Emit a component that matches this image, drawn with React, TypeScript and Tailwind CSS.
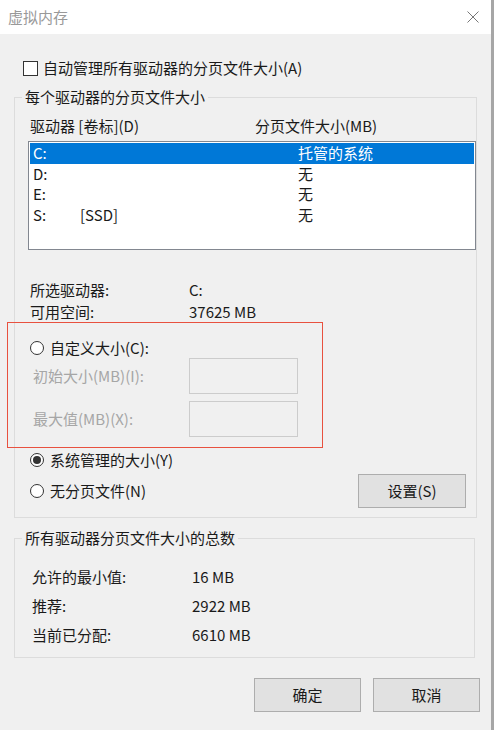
const drives = [
  { letter: 'C:', label: '', size: '托管的系统' },
  { letter: 'D:', label: '', size: '无' },
  { letter: 'E:', label: '', size: '无' },
  { letter: 'S:', label: '[SSD]', size: '无' },
];

function Radio({ checked }: { checked?: boolean }) {
  return (
    <span className="flex h-[14px] w-[14px] shrink-0 items-center justify-center rounded-full border border-[#333] bg-white">
      {checked && <span className="h-[8px] w-[8px] rounded-full bg-[#333]" />}
    </span>
  );
}

function Button({ label, className = '' }: { label: string; className?: string }) {
  return (
    <button
      className={`flex h-[34px] w-[107px] items-center justify-center border border-[#adadad] bg-[#e1e1e1] text-[15px] leading-[20px] text-[#1a1a1a] ${className}`}
    >
      {label}
    </button>
  );
}

export default function App() {
  return (
    <div className="relative flex h-[730px] w-[494px] bg-[#f0f0f0] font-['Noto_Sans_CJK_SC','Noto_Sans',sans-serif] text-[15px] text-[#1a1a1a]">
      <div className="flex flex-1 flex-col">
        {/* title bar */}
        <div className="flex h-[34px] items-center justify-between bg-white pl-[8px] pr-[12px]">
          <span className="leading-[20px] text-[#999]">虚拟内存</span>
          <svg width="12" height="12" viewBox="0 0 12 12" stroke="#777" strokeWidth="1">
            <path d="M0.5 0.5L11.5 11.5M11.5 0.5L0.5 11.5" />
          </svg>
        </div>

        <label className="mt-[26px] flex h-[16px] items-center gap-[5px] pl-[23px] leading-[20px]">
          <span className="h-[15px] w-[15px] shrink-0 border border-[#333] bg-white" />
          自动管理所有驱动器的分页文件大小(A)
        </label>

        <fieldset className="ml-[14px] mt-[11px] w-[461px] border border-[#dcdcdc]">
          <legend className="ml-[7px] px-[3px] leading-[20px]">每个驱动器的分页文件大小</legend>
          <div className="pb-[9px] pl-[13px]">
            <div className="mt-[9px] flex h-[20px] pl-[2px] leading-[20px]">
              <span className="w-[225px]">驱动器 [卷标](D)</span>
              <span>分页文件大小(MB)</span>
            </div>

            <div className="mt-[5px] h-[109px] w-[448px] border border-[#828790] bg-white p-[1px]">
              {drives.map((d, i) => (
                <div
                  key={d.letter}
                  className={`flex h-[20.5px] items-center pl-[3px] leading-[20px] ${
                    i === 0 ? 'bg-[#0078d7] text-white' : ''
                  }`}
                >
                  <span className="w-[47px]">{d.letter}</span>
                  <span className="w-[218px]">{d.label}</span>
                  <span>{d.size}</span>
                </div>
              ))}
            </div>

            <div className="mt-[29px] flex h-[22px] items-center pl-[2px] leading-[20px]">
              <span className="w-[159px]">所选驱动器:</span>
              <span>C:</span>
            </div>
            <div className="flex h-[22px] items-center pl-[2px] leading-[20px]">
              <span className="w-[159px]">可用空间:</span>
              <span>37625 MB</span>
            </div>

            <div className="mt-[15px] flex h-[20px] items-center gap-[6px] pl-[2px] leading-[20px]">
              <Radio />
              自定义大小(C):
            </div>
            <div className="flex h-[36px] items-center pl-[5px] leading-[20px] text-[#a6a6a6]">
              <span className="w-[156px]">初始大小(MB)(I):</span>
              <span className="h-[36px] w-[109px] border border-[#cccccc] bg-[#f0f0f0]" />
            </div>
            <div className="mt-[7px] flex h-[36px] items-center pl-[5px] leading-[20px] text-[#a6a6a6]">
              <span className="w-[156px]">最大值(MB)(X):</span>
              <span className="h-[36px] w-[109px] border border-[#cccccc] bg-[#f0f0f0]" />
            </div>

            <div className="mt-[13px] flex h-[20px] items-center gap-[6px] pl-[2px] leading-[20px]">
              <Radio checked />
              系统管理的大小(Y)
            </div>
            <div className="mt-[4px] flex h-[34px] items-center pl-[2px] leading-[20px]">
              <Radio />
              <span className="ml-[6px]">无分页文件(N)</span>
              <Button label="设置(S)" className="ml-auto mr-[10px] w-[108px]" />
            </div>
          </div>
        </fieldset>

        <fieldset className="ml-[14px] mt-[10px] w-[461px] border border-[#dcdcdc]">
          <legend className="ml-[7px] px-[3px] leading-[20px]">所有驱动器分页文件大小的总数</legend>
          <div className="pb-[8px] pl-[17px] pt-[14px]">
            {[
              ['允许的最小值:', '16 MB'],
              ['推荐:', '2922 MB'],
              ['当前已分配:', '6610 MB'],
            ].map(([k, v]) => (
              <div key={k} className="flex h-[29px] items-center leading-[20px]">
                <span className="w-[160px]">{k}</span>
                <span>{v}</span>
              </div>
            ))}
          </div>
        </fieldset>

        <div className="mt-[20px] flex justify-end gap-[12px] pr-[11px]">
          <Button label="确定" />
          <Button label="取消" />
        </div>
      </div>
      <div className="w-[3px] bg-[#a6a6a6]" />

      {/* annotation box */}
      <div className="absolute left-[7px] top-[322px] h-[126px] w-[316px] border-[1.5px] border-[#e8513f]" />
    </div>
  );
}
